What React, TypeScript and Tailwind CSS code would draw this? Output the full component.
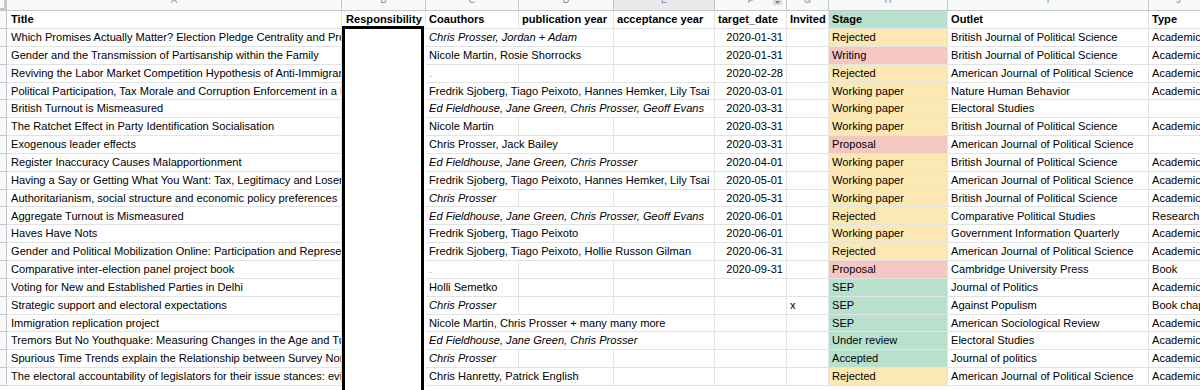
import React from 'react';

type Stage = 'Rejected' | 'Writing' | 'Working paper' | 'Proposal' | 'SEP' | 'Under review' | 'Accepted';

interface Paper {
  title: string;
  coauthors: string;
  italic?: boolean;
  span: 1 | 2 | 3;
  target?: string;
  invited?: string;
  stage: Stage;
  outlet: string;
  type?: string;
}

const papers: Paper[] = [
  { title: 'Which Promises Actually Matter? Election Pledge Centrality and Promise Keeping', coauthors: 'Chris Prosser, Jordan + Adam', italic: true, span: 2, target: '2020-01-31', stage: 'Rejected', outlet: 'British Journal of Political Science', type: 'Academic' },
  { title: 'Gender and the Transmission of Partisanship within the Family', coauthors: 'Nicole Martin, Rosie Shorrocks', span: 2, target: '2020-01-31', stage: 'Writing', outlet: 'British Journal of Political Science', type: 'Academic' },
  { title: 'Reviving the Labor Market Competition Hypothesis of Anti-Immigrant Attitudes', coauthors: '.', span: 1, target: '2020-02-28', stage: 'Rejected', outlet: 'American Journal of Political Science', type: 'Academic' },
  { title: 'Political Participation, Tax Morale and Corruption Enforcement in a Developing Country', coauthors: 'Fredrik Sjoberg, Tiago Peixoto, Hannes Hemker, Lily Tsai', span: 3, target: '2020-03-01', stage: 'Working paper', outlet: 'Nature Human Behavior', type: 'Academic' },
  { title: 'British Turnout is Mismeasured', coauthors: 'Ed Fieldhouse, Jane Green, Chris Prosser, Geoff Evans', italic: true, span: 3, target: '2020-03-31', stage: 'Working paper', outlet: 'Electoral Studies' },
  { title: 'The Ratchet Effect in Party Identification Socialisation', coauthors: 'Nicole Martin', span: 1, target: '2020-03-31', stage: 'Working paper', outlet: 'British Journal of Political Science', type: 'Academic' },
  { title: 'Exogenous leader effects', coauthors: 'Chris Prosser, Jack Bailey', span: 2, target: '2020-03-31', stage: 'Proposal', outlet: 'American Journal of Political Science' },
  { title: 'Register Inaccuracy Causes Malapportionment', coauthors: 'Ed Fieldhouse, Jane Green, Chris Prosser', italic: true, span: 3, target: '2020-04-01', stage: 'Working paper', outlet: 'British Journal of Political Science', type: 'Academic' },
  { title: 'Having a Say or Getting What You Want: Tax, Legitimacy and Loser Consent', coauthors: 'Fredrik Sjoberg, Tiago Peixoto, Hannes Hemker, Lily Tsai', span: 3, target: '2020-05-01', stage: 'Working paper', outlet: 'American Journal of Political Science', type: 'Academic' },
  { title: 'Authoritarianism, social structure and economic policy preferences', coauthors: 'Chris Prosser', italic: true, span: 1, target: '2020-05-31', stage: 'Working paper', outlet: 'British Journal of Political Science', type: 'Academic' },
  { title: 'Aggregate Turnout is Mismeasured', coauthors: 'Ed Fieldhouse, Jane Green, Chris Prosser, Geoff Evans', italic: true, span: 3, target: '2020-06-01', stage: 'Rejected', outlet: 'Comparative Political Studies', type: 'Research' },
  { title: 'Haves Have Nots', coauthors: 'Fredrik Sjoberg, Tiago Peixoto', span: 2, target: '2020-06-01', stage: 'Working paper', outlet: 'Government Information Quarterly', type: 'Academic' },
  { title: 'Gender and Political Mobilization Online: Participation and Representation', coauthors: 'Fredrik Sjoberg, Tiago Peixoto, Hollie Russon Gilman', span: 3, target: '2020-06-31', stage: 'Rejected', outlet: 'American Journal of Political Science', type: 'Academic' },
  { title: 'Comparative inter-election panel project book', coauthors: '.', span: 1, target: '2020-09-31', stage: 'Proposal', outlet: 'Cambridge University Press', type: 'Book' },
  { title: 'Voting for New and Established Parties in Delhi', coauthors: 'Holli Semetko', span: 1, stage: 'SEP', outlet: 'Journal of Politics', type: 'Academic' },
  { title: 'Strategic support and electoral expectations', coauthors: 'Chris Prosser', italic: true, span: 1, invited: 'x', stage: 'SEP', outlet: 'Against Populism', type: 'Book chapter' },
  { title: 'Immigration replication project', coauthors: 'Nicole Martin, Chris Prosser + many many more', span: 3, stage: 'SEP', outlet: 'American Sociological Review', type: 'Academic' },
  { title: 'Tremors But No Youthquake: Measuring Changes in the Age and Turnout Gradients', coauthors: 'Ed Fieldhouse, Jane Green, Chris Prosser', italic: true, span: 3, stage: 'Under review', outlet: 'Electoral Studies', type: 'Academic' },
  { title: 'Spurious Time Trends explain the Relationship between Survey Non-response', coauthors: 'Chris Prosser', italic: true, span: 1, stage: 'Accepted', outlet: 'Journal of politics', type: 'Academic' },
  { title: 'The electoral accountability of legislators for their issue stances: evidence', coauthors: 'Chris Hanretty, Patrick English', span: 2, stage: 'Rejected', outlet: 'American Journal of Political Science', type: 'Academic' },
];

const stageColors: Record<Stage, string> = {
  Rejected: 'bg-[#fce8b2]',
  'Working paper': 'bg-[#fce8b2]',
  Writing: 'bg-[#f4c7c3]',
  Proposal: 'bg-[#f4c7c3]',
  SEP: 'bg-[#b7e1cd]',
  'Under review': 'bg-[#b7e1cd]',
  Accepted: 'bg-[#b7e1cd]',
};

const spanClass = { 1: 'col-span-1', 2: 'col-span-2', 3: 'col-span-3' };

const gridCols = 'grid grid-cols-[7px_335px_84px_93px_95px_101px_72px_42px_119px_201px_60px]';
const cell = 'flex items-center overflow-hidden whitespace-nowrap border-r border-b border-[#e2e3e3] px-[3px]';

const letters = ['A', 'B', 'C', 'D', 'E', 'F', 'G', 'H', 'I', 'J'];

export default function App() {
  return (
    <div
      className="relative w-[1200px] h-[390px] overflow-hidden bg-white text-black"
      style={{ fontFamily: '"Liberation Sans", Arial, sans-serif' }}
    >
      {/* Column letters */}
      <div className={`${gridCols} h-[11px] bg-[#f8f9fa]`}>
        <div className="border-r-[3px] border-b-[3px] border-[#c4c7c5] bg-[#f8f9fa]" />
        {letters.map((l) => (
          <div
            key={l}
            className={`relative flex justify-center overflow-hidden border-r border-b border-[#c4c7c5] ${
              l === 'E' ? 'bg-[#e8eaed]' : ''
            }`}
          >
            <span className="-mt-[4px] text-[9px] leading-[9px] text-[#80868b]">{l}</span>
            {l === 'F' && (
              <span className="absolute right-[4px] top-[-4px] flex h-[9px] w-[9px] items-end justify-center rounded-[1px] bg-[#dadce0] pb-[1px]">
                <svg width="5" height="3" viewBox="0 0 5 3">
                  <path d="M0 0h5L2.5 3z" fill="#80868b" />
                </svg>
              </span>
            )}
          </div>
        ))}
      </div>

      {/* Header row */}
      <div className={`${gridCols} h-[18px] text-[11.1px] font-bold`}>
        <div className="border-r border-b border-[#c4c7c5] bg-[#f8f9fa]" />
        <div className={`${cell} pl-[4px]`}>Title</div>
        <div className={`${cell} pl-[4px]`}>Responsibility</div>
        <div className={cell}>Coauthors</div>
        <div className={cell}>publication year</div>
        <div className={cell}>acceptance year</div>
        <div className={cell}>target_date</div>
        <div className={cell}>Invited</div>
        <div className={`${cell} bg-[#b7e1cd]`}>Stage</div>
        <div className={cell}>Outlet</div>
        <div className={cell}>Type</div>
      </div>

      {/* Data rows */}
      {papers.map((p, i) => (
        <div key={i} className={`${gridCols} h-[17.85px] text-[11.1px]`}>
          <div className="border-r border-b border-[#c4c7c5] bg-[#f8f9fa]" />
          <div className={`${cell} pl-[4px]`}>{p.title}</div>
          <div className="bg-white" />
          <div className={`${cell} ${spanClass[p.span]} ${p.italic ? 'italic' : ''} ${p.coauthors === '.' ? 'text-[#999]' : ''}`}>
            {p.coauthors}
          </div>
          {p.span < 2 && <div className={cell} />}
          {p.span < 3 && <div className={cell} />}
          <div className={`${cell} justify-end`}>{p.target}</div>
          <div className={cell}>{p.invited}</div>
          <div className={`${cell} ${stageColors[p.stage]}`}>{p.stage}</div>
          <div className={cell}>{p.outlet}</div>
          <div className={cell}>{p.type}</div>
        </div>
      ))}

      {/* Selection border on Responsibility column */}
      <div className="pointer-events-none absolute left-[342px] top-[26px] h-[380px] w-[82px] border-[3px] border-black" />
    </div>
  );
}
